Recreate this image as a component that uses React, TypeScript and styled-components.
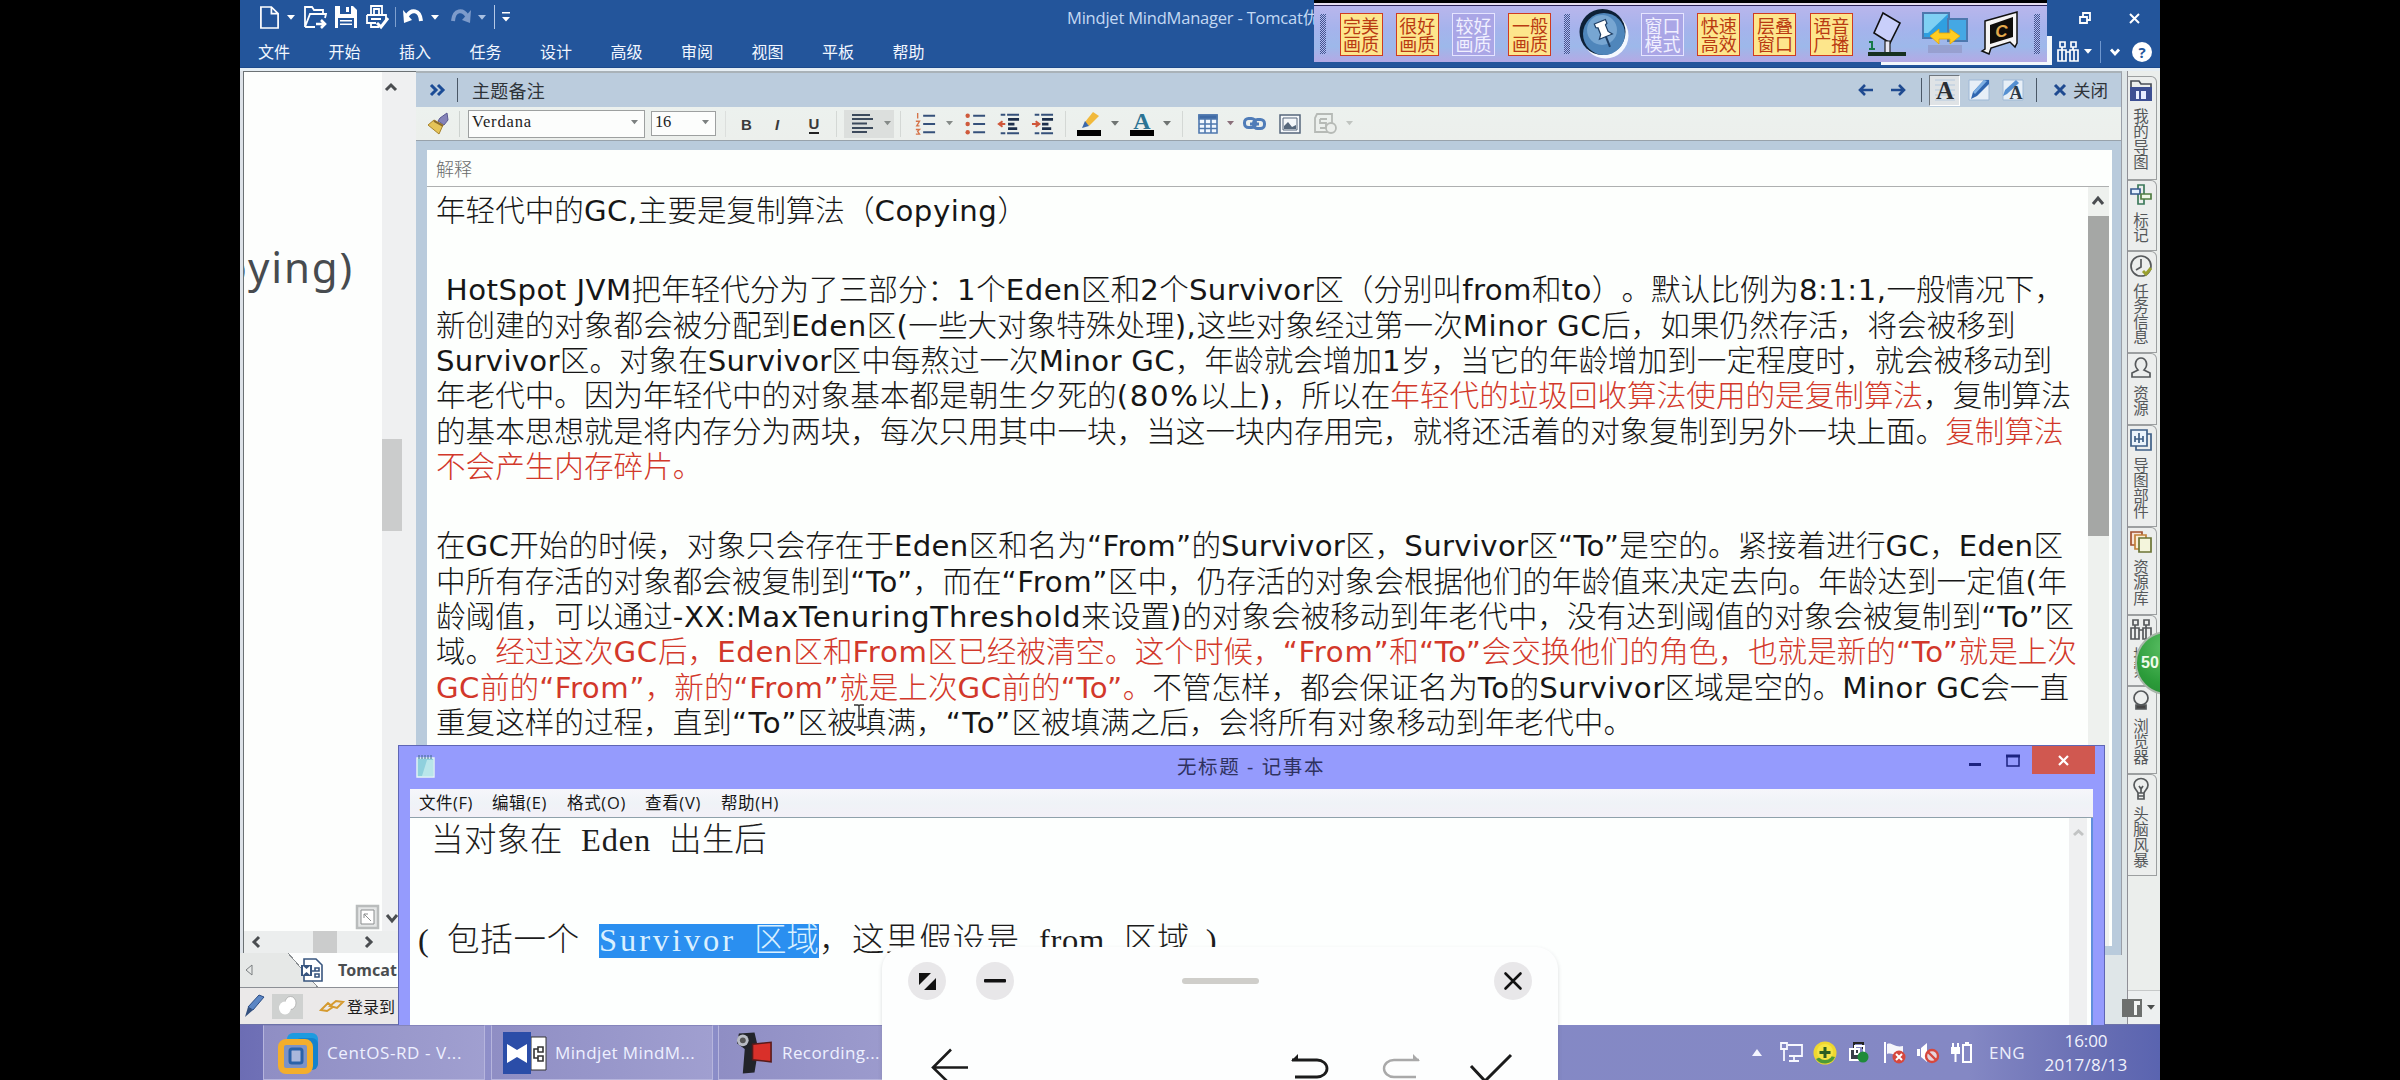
import React, { useLayoutEffect, useRef, useState } from "react";
import styled, { createGlobalStyle, css } from "styled-components";

const CJK = `"Noto Sans CJK SC", sans-serif`;
const UI = `"Open Sans", "Noto Sans CJK SC", sans-serif`;
const SONG = `"Liberation Serif", "Noto Sans CJK SC", serif`;

const Global = createGlobalStyle`
  *, *::before, *::after { box-sizing: border-box; }
  html, body { margin: 0; background: #000; overflow: hidden; }
  svg { display: block; flex: none; overflow: visible; }
`;

/* ---------- text that is justified to a known width ---------- */

const FitBox = styled.span`
  display: inline-block;
  white-space: pre;
  flex: none;
`;

function Fit({ w, children }: { w: number; children: React.ReactNode }) {
  const ref = useRef<HTMLSpanElement>(null);
  const [gap, setGap] = useState(0);
  useLayoutEffect(() => {
    const el = ref.current;
    if (!el) return;
    el.style.letterSpacing = "0px";
    const natural = el.getBoundingClientRect().width;
    const next = (w - natural) / (el.textContent || " ").length;
    el.style.letterSpacing = `${next}px`;
    setGap(next);
  }, [w]);
  return (
    <FitBox ref={ref} style={{ letterSpacing: gap }}>
      {children}
    </FitBox>
  );
}

/* ---------- shell ---------- */

const Page = styled.div`
  width: 2400px;
  height: 1080px;
  background: #000;
  display: flex;
  justify-content: center;
  overflow: hidden;
`;

const Screen = styled.div`
  position: relative;
  width: 1920px;
  height: 1080px;
  overflow: hidden;
  display: flex;
  flex-direction: column;
  background: #e9ecec;
  font-family: ${UI};
  text-spacing-trim: space-all;
`;

const Cell = styled.div<{ $ml?: number; $w?: number }>`
  flex: none;
  display: flex;
  align-items: center;
  justify-content: center;
  margin-left: ${(p) => p.$ml ?? 0}px;
  ${(p) => p.$w !== undefined && css`width: ${p.$w}px;`}
`;

const Rule = styled.i<{ $ml?: number; $h: number; $c: string; $w?: number }>`
  flex: none;
  width: ${(p) => p.$w ?? 1}px;
  height: ${(p) => p.$h}px;
  margin-left: ${(p) => p.$ml ?? 0}px;
  background: ${(p) => p.$c};
`;

/* ---------- title bar and ribbon ---------- */

const TitleBar = styled.header`
  flex: none;
  height: 68px;
  background: #23559b;
  border-bottom: 1px solid #1d4a8c;
  color: #e6effa;
`;

const QuickRow = styled.div`
  height: 34px;
  display: flex;
  align-items: center;
`;

const WindowTitle = styled.div`
  margin: 0 841px 0 auto;
  font-size: 16.5px;
  color: #c3d9f3;
`;

const MenuRow = styled.nav`
  height: 34px;
  padding-left: 18px;
  display: flex;
  align-items: center;
`;

const MenuItem = styled.span`
  flex: none;
  width: 70.5px;
  font: 400 16px/34px ${CJK};
  color: #f2f7ff;
`;

const Down = ({ c = "#fff", s = 8 }: { c?: string; s?: number }) => (
  <svg width={s} height={s * 0.6} viewBox="0 0 10 6">
    <path d="M0 0H10L5 6Z" fill={c} />
  </svg>
);

function TitleArea() {
  return (
    <TitleBar>
      <QuickRow>
        <Cell $ml={18} $w={22}>
          <svg width="21" height="23" viewBox="0 0 22 24" fill="none" stroke="#fff" strokeWidth="1.8">
            <path d="M2 1H13L20 8V23H2ZM13 1V8H20" />
          </svg>
        </Cell>
        <Cell $ml={7}><Down /></Cell>
        <Cell $ml={8} $w={24}>
          <svg width="24" height="24" viewBox="0 0 24 24" fill="none" stroke="#fff" strokeWidth="1.8">
            <path d="M2 22V2H9L11 5H20V8M2 22L7 9H23L22 13M2 22H12" />
            <path d="M13 19H22M18 15L22 19L18 23" strokeWidth="2.6" />
          </svg>
        </Cell>
        <Cell $ml={7} $w={24}>
          <svg width="24" height="24" viewBox="0 0 24 24">
            <path d="M1 1H19L23 5V23H1Z" fill="#fff" />
            <path d="M6 1H17V9H6ZM4 13H20V23H4Z" fill="#23559b" />
            <path d="M12 2H15V7H12ZM6 15H18V16.5H6ZM6 18.5H18V20H6Z" fill="#fff" />
          </svg>
        </Cell>
        <Cell $ml={7} $w={24}>
          <svg width="24" height="24" viewBox="0 0 24 24" fill="none" stroke="#fff" strokeWidth="1.8">
            <path d="M6 10V1H17V10M9 10V4H14V10M2 10H21V15M2 10V18H6V22H14M6 14H16M6 18H11" />
            <path d="M12 18L16 22L23 13" strokeWidth="3" />
          </svg>
        </Cell>
        <Rule $ml={6} $h={20} $c="#7fa0cf" />
        <Cell $ml={7} $w={21}>
          <svg width="21" height="18" viewBox="0 0 21 18">
            <path d="M4 8C8 1 17 1 18 13" fill="none" stroke="#fff" strokeWidth="4" />
            <path d="M0 2L9 12L1 15Z" fill="#fff" />
          </svg>
        </Cell>
        <Cell $ml={7}><Down /></Cell>
        <Cell $ml={11} $w={21}>
          <svg width="21" height="18" viewBox="0 0 21 18">
            <path d="M17 8C13 1 4 1 3 13" fill="none" stroke="#7d9bcb" strokeWidth="4" />
            <path d="M21 2L12 12L20 15Z" fill="#7d9bcb" />
          </svg>
        </Cell>
        <Cell $ml={7}><Down c="#a9c0e2" /></Cell>
        <Rule $ml={8} $h={24} $c="#b4c8e6" />
        <Cell $ml={7}>
          <svg width="8" height="10" viewBox="0 0 8 10">
            <path d="M0 0H8V1.6H0ZM0 5H8L4 9.5Z" fill="#fff" />
          </svg>
        </Cell>
        <WindowTitle>
          <Fit w={252}>Mindjet MindManager - Tomcat优</Fit>
        </WindowTitle>
      </QuickRow>
      <MenuRow>
        {["文件", "开始", "插入", "任务", "设计", "高级", "审阅", "视图", "平板", "帮助"].map((m) => (
          <MenuItem key={m}>{m}</MenuItem>
        ))}
      </MenuRow>
    </TitleBar>
  );
}

/* window buttons at the right end of the title bar */
const WindowButtons = styled.div`
  position: absolute;
  left: 1812px;
  top: 0;
  width: 108px;
  height: 67px;
  display: grid;
  grid-template-rows: 36px 31px;
`;
const ButtonLine = styled.div`
  display: flex;
  align-items: center;
`;

/* ---------- floating capture bar ---------- */

const CaptureBar = styled.div`
  position: absolute;
  left: 1074px;
  top: 0;
  width: 733px;
  height: 62px;
  display: flex;
  align-items: center;
  padding-top: 6px;
  background: linear-gradient(#000 0 3px, #e8dff0 3px 5px, #2c2458 5px 6px, #b9b6ec 6px, #a6b3ec 45%, #9db8ea 75%, #b4a9e4);
`;
const CaptureShadow = styled.div`
  position: absolute;
  left: 1641px;
  top: 36px;
  width: 171px;
  height: 29px;
  border: solid #f4f8fb;
  border-width: 0 5px 4px 0;
`;
const Grip = styled.i<{ $ml: number }>`
  flex: none;
  width: 6px;
  height: 40px;
  margin-left: ${(p) => p.$ml}px;
  background: repeating-conic-gradient(#47548f 0 25%, #aebcf0 0 50%) 0 0 / 2px 2px;
`;
const Stamp = styled.div<{ $ml: number; $off?: boolean }>`
  flex: none;
  width: 43px;
  height: 43px;
  margin-left: ${(p) => p.$ml}px;
  border: 1.5px solid ${(p) => (p.$off ? "#e5e4ff" : "#cf3b22")};
  background: ${(p) => (p.$off ? "#aaa6e6" : "#fde68c")};
  color: ${(p) => (p.$off ? "#f1f0ff" : "#b93a12")};
  display: grid;
  place-content: center;
  text-align: center;
  font: 400 18px/18px ${CJK};
`;

function Capture() {
  return (
    <>
      <CaptureShadow />
      <CaptureBar>
        <Grip $ml={6} />
        <Stamp $ml={13.5}>完美<br />画质</Stamp>
        <Stamp $ml={13.3}>很好<br />画质</Stamp>
        <Stamp $ml={13.3} $off>较好<br />画质</Stamp>
        <Stamp $ml={13.3}>一般<br />画质</Stamp>
        <Grip $ml={13} />
        <Cell $ml={9} $w={50}>
          <svg width="50" height="50" viewBox="0 0 50 50">
            <circle cx="26.5" cy="26.5" r="23" fill="#f4f8ff" />
            <circle cx="23.5" cy="23" r="23" fill="#0d2036" />
            <circle cx="25" cy="25" r="21" fill="#4f86bb" />
            <circle cx="23" cy="21" r="15" fill="#77a6d2" />
            <g transform="rotate(-22 25 23)">
              <path d="M19 12H31V16L29 17V24L32 28H18L21 24V17L19 16Z" fill="#fff" stroke="#1d3d63" strokeWidth="1.2" />
              <path d="M25 28V39" stroke="#1d3d63" strokeWidth="2" />
            </g>
          </svg>
        </Cell>
        <Stamp $ml={11.5} $off>窗口<br />模式</Stamp>
        <Stamp $ml={13.3}>快速<br />高效</Stamp>
        <Stamp $ml={13.3}>层叠<br />窗口</Stamp>
        <Stamp $ml={13.3}>语音<br />广播</Stamp>
        <Cell $ml={14} $w={40}>
          <svg width="40" height="46" viewBox="0 0 40 46">
            <path d="M16 2L33 12L23 32L7 22Z" fill="#c9cffa" stroke="#111" strokeWidth="1.6" />
            <path d="M18 30H23V42H18Z" fill="#e8e8f4" stroke="#222" strokeWidth="1.2" />
            <path d="M1 43H39" stroke="#17301f" strokeWidth="4" />
            <path d="M2 31H5V38M2 38H8" stroke="#157a4a" strokeWidth="2" fill="none" />
          </svg>
        </Cell>
        <Cell $ml={15} $w={46}>
          <svg width="46" height="46" viewBox="0 0 46 46">
            <path d="M6 34H40V42H6Z" fill="#8f93bf" opacity="0.6" />
            <path d="M1 2H27V27H1Z" fill="#2f9fe0" stroke="#4d78ae" strokeWidth="2" />
            <path d="M26 8H45V30H26Z" fill="#45a8e4" stroke="#4d78ae" strokeWidth="2" />
            <path d="M2 3H26L6 22H2Z" fill="#7fd0f3" />
            <path d="M8 25L17 18V22H28V18L38 25L28 33V28H17V33Z" fill="#ffcd23" stroke="#e8a400" strokeWidth="0.8" />
          </svg>
        </Cell>
        <Cell $ml={14} $w={38}>
          <svg width="38" height="46" viewBox="0 0 38 46">
            <path d="M3 10L35 1V32L33 36L28 31L9 37L7 43L0 40L3 38Z" fill="#f5f4f4" stroke="#111" strokeWidth="1.5" />
            <path d="M8 14L31 6V26L8 33Z" fill="#0f0d0a" />
            <text x="19.5" y="26" textAnchor="middle" fontFamily="Liberation Sans, sans-serif" fontWeight="700" fontStyle="italic" fontSize="17" fill="#e2a94c">C</text>
          </svg>
        </Cell>
        <Grip $ml={14} />
      </CaptureBar>
      <WindowButtons>
        <ButtonLine>
          <Cell $ml={27} $w={12}>
            <svg width="12" height="12" viewBox="0 0 12 12" fill="none" stroke="#fff" strokeWidth="1.8">
              <path d="M1 5H8V11H1ZM4 5V1H11V8H8" />
            </svg>
          </Cell>
          <Cell $ml={38} $w={11}>
            <svg width="11" height="11" viewBox="0 0 11 11" stroke="#fff" strokeWidth="2">
              <path d="M1 1L10 10M10 1L1 10" />
            </svg>
          </Cell>
        </ButtonLine>
        <ButtonLine>
          <Cell $ml={5} $w={22}>
            <svg width="22" height="22" viewBox="0 0 22 22" fill="none" stroke="#fff" strokeWidth="1.7">
              <path d="M3 1H8V6H3ZM14 1H19V6H14ZM1 9H9V20H1ZM13 9H21V20H13ZM9 11H13M5 9V20M17 9V20M5 6V9M16 6V9" />
            </svg>
          </Cell>
          <Cell $ml={5}><Down /></Cell>
          <Rule $ml={8} $h={22} $c="#6f97cf" />
          <Cell $ml={9} $w={10}>
            <svg width="10" height="8" viewBox="0 0 10 8" fill="none" stroke="#fff" strokeWidth="2.8">
              <path d="M1 1.5L5 6L9 1.5" />
            </svg>
          </Cell>
          <Cell $ml={12} $w={20}>
            <svg width="20" height="20" viewBox="0 0 20 20">
              <circle cx="10" cy="10" r="10" fill="#fff" />
              <text x="10" y="15.5" textAnchor="middle" fontFamily="Open Sans, sans-serif" fontWeight="700" fontSize="15" fill="#23559b">?</text>
            </svg>
          </Cell>
        </ButtonLine>
      </WindowButtons>
    </>
  );
}

/* ---------- work area ---------- */

const Work = styled.div`
  flex: none;
  height: 956px;
  display: flex;
  border-top: 3px solid #e6eef4;
`;

const MapPane = styled.section`
  flex: none;
  width: 176px;
  display: flex;
  flex-direction: column;
  background: #dde2e8;
`;
const Canvas = styled.div`
  height: 860px;
  margin-left: 3px;
  border-left: 1px solid #6c7275;
  border-top: 1px solid #6c7275;
  display: grid;
  grid-template-columns: 138px 1fr;
  background: #fdfefd;
`;
const MapText = styled.div`
  overflow: hidden;
  display: flex;
  justify-content: flex-end;
  padding: 165px 28px 0 0;
  font: 400 42px/60px "Noto Sans", sans-serif;
  color: #474b4f;
`;
const Track = styled.div<{ $c?: string }>`
  background: ${(p) => p.$c ?? "#eff0f1"};
  display: flex;
  flex-direction: column;
  align-items: flex-start;
`;
const Spacer = styled.div<{ $h: number }>`
  flex: none;
  height: ${(p) => p.$h}px;
`;
const Thumb = styled.i<{ $ml?: number; $w: number; $h: number; $c?: string }>`
  display: block;
  flex: none;
  margin-left: ${(p) => p.$ml ?? 0}px;
  width: ${(p) => p.$w}px;
  height: ${(p) => p.$h}px;
  background: ${(p) => p.$c ?? "#cbcccc"};
`;
const HScroll = styled.div`
  height: 22px;
  margin-left: 3px;
  border-left: 1px solid #6c7275;
  background: #eceeee;
  display: flex;
  align-items: center;
`;
const SheetTabs = styled.div`
  height: 35px;
  display: flex;
  align-items: center;
  background: linear-gradient(49deg, #e6e8e7 58px, #8b8f92 58px 59px, #fdfefe 59px);
  border-bottom: 1px solid #8c8f95;
  font: 700 16px/34px "Noto Sans", sans-serif;
  color: #4a4d50;
`;
const StatusBar = styled.div`
  flex: 1;
  display: flex;
  align-items: center;
  background: #ebe9e9;
  font: 400 16px/30px ${CJK};
  color: #1c1c1c;
`;
const Pressed = styled.div<{ $ml: number; $w: number; $h: number }>`
  flex: none;
  display: grid;
  place-items: center;
  margin-left: ${(p) => p.$ml}px;
  width: ${(p) => p.$w}px;
  height: ${(p) => p.$h}px;
  background: #cfd1d0;
`;

const Chevron = ({ d, c = "#4a4d50", w = 12, h = 8 }: { d: string; c?: string; w?: number; h?: number }) => (
  <svg width={w} height={h} viewBox={`0 0 ${w} ${h}`} fill="none" stroke={c} strokeWidth="3">
    <path d={d} />
  </svg>
);

function MindMap() {
  return (
    <MapPane>
      <Canvas>
        <MapText><Fit w={133}>pying)</Fit></MapText>
        <Track>
          <Spacer $h={11} />
          <Cell $ml={3}><Chevron d="M1 7L6 2L11 7" h={9} /></Cell>
          <Spacer $h={347} />
          <Thumb $w={20} $h={92} />
          <Spacer $h={374} />
          <Cell $ml={-26}>
            <svg width="23" height="24" viewBox="0 0 23 24" fill="none" stroke="#8a8d8e">
              <path d="M1 1H22V23H1Z" stroke="#b9bcbc" strokeWidth="2.5" fill="#e4e6e6" />
              <path d="M5 5H18V19H5Z" fill="#fff" />
              <path d="M8 13V9H12M8 9L15 16" />
            </svg>
            <Cell $ml={7}><Chevron d="M1 2L6 8L11 2" h={9} /></Cell>
          </Cell>
        </Track>
      </Canvas>
      <HScroll>
        <Cell $ml={8}><Chevron w={8} h={12} d="M7 1L2 6L7 11" /></Cell>
        <Thumb $ml={53} $w={24} $h={22} />
        <Cell $ml={28}><Chevron w={8} h={12} d="M1 1L6 6L1 11" /></Cell>
      </HScroll>
      <SheetTabs>
        <Cell $ml={5} $w={8}>
          <svg width="8" height="12" viewBox="0 0 8 12" fill="none" stroke="#7a7e80"><path d="M7 1V11L1 6Z" /></svg>
        </Cell>
        <Cell $ml={48} $w={22}>
          <svg width="22" height="24" viewBox="0 0 22 24" fill="#fff" stroke="#38557f" strokeWidth="1.6">
            <path d="M3 1H15L21 7V23H3Z" />
            <path d="M0 7H11V18H0Z" fill="#38557f" stroke="none" />
            <path d="M2 8L5.5 11L9 8V17L5.5 14L2 17Z" stroke="none" />
            <path d="M14 10H18V13H14ZM14 16H18V19H14ZM11 13H14" fill="none" />
          </svg>
        </Cell>
        <Cell $ml={15}><Fit w={59}>Tomcat</Fit></Cell>
      </SheetTabs>
      <StatusBar>
        <Cell $ml={5} $w={20}>
          <svg width="20" height="22" viewBox="0 0 20 22">
            <path d="M19 2L8 15L3 12L14 0Z" fill="#5b86c4" stroke="#2c4d85" />
            <path d="M8 15L0 22L3 12Z" fill="#33507f" />
          </svg>
        </Cell>
        <Pressed $ml={7} $w={31} $h={25}>
          <svg width="20" height="20" viewBox="0 0 20 20">
            <ellipse cx="12.5" cy="7" rx="5.5" ry="6.5" fill="#fff" stroke="#a5a5a5" strokeWidth="0.7" />
            <ellipse cx="7" cy="12" rx="6" ry="6.5" fill="#fff" />
          </svg>
        </Pressed>
        <Cell $ml={17} $w={24}>
          <svg width="24" height="14" viewBox="0 0 24 14" fill="none" stroke="#d59a2e" strokeWidth="2">
            <path d="M1 11L8 4L13 8L7 12ZM10 7L16 2L23 3L17 9Z" />
          </svg>
        </Cell>
        <Cell $ml={3}><Fit w={48}>登录到</Fit></Cell>
      </StatusBar>
    </MapPane>
  );
}

/* ---------- notes panel ---------- */

const NotesPane = styled.section`
  flex: none;
  width: 1712px;
  display: flex;
  flex-direction: column;
  border-right: 1px solid #8f8f96;
  background: #dfe6e8;
`;
const NotesFrame = styled.div`
  width: 1706px;
  height: 884px;
  display: flex;
  flex-direction: column;
  background: #b9cbdc;
  border-top: 2px solid #a9b2b8;
  border-right: 1px solid #9a9fa8;
`;
const NotesHead = styled.div`
  flex: none;
  height: 34px;
  display: flex;
  align-items: center;
  background: #bbccdd;
  color: #2e3338;
  font: 400 18px/32px ${CJK};
`;
const HeadClose = styled.div`
  margin: 0 13px 0 7px;
  font-size: 17.5px;
`;
const Push = styled.i`
  flex: 1;
`;
const NotesTools = styled.div`
  flex: none;
  height: 34px;
  display: flex;
  align-items: center;
  background: linear-gradient(#ecf1ee, #ecefec);
  border-bottom: 1px solid #98a2ab;
`;
const Combo = styled.div<{ $ml: number; $w: number; $h: number }>`
  flex: none;
  margin-left: ${(p) => p.$ml}px;
  width: ${(p) => p.$w}px;
  height: ${(p) => p.$h}px;
  border: 1px solid #9da0a0;
  background: #fcfdfc;
  display: flex;
  align-items: center;
  justify-content: space-between;
  padding: 0 6px 3px 3px;
  font: 400 16.5px/20px ${SONG};
  color: #222;
`;
const Glyph = styled.span<{ $italic?: boolean; $under?: boolean }>`
  font: 700 15px/20px "Liberation Sans", sans-serif;
  font-style: ${(p) => (p.$italic ? "italic" : "normal")};
  color: #3a3a3a;
  padding-top: 3px;
  ${(p) => p.$under && css`line-height: 16px; border-bottom: 2px solid #222;`}
`;
const Toggle = styled.div`
  flex: none;
  width: 31px;
  height: 31px;
  margin-left: 7px;
  display: grid;
  place-items: center;
  background: #dfe3e6;
  border: 1.5px solid #6f767d;
  border-color: #6f767d #fff #fff #6f767d;
`;
const Shade = styled.div`
  flex: none;
  height: 28px;
  width: 50px;
  margin-left: 7px;
  display: flex;
  align-items: center;
  padding-left: 8px;
  background: #dcdfdd;
`;

const NotesPaper = styled.article`
  margin: 9px 9px 9px 11px;
  flex: 1;
  min-height: 0;
  display: flex;
  flex-direction: column;
  background: #fdfffd;
`;
const TopicName = styled.div`
  flex: none;
  height: 37px;
  margin-right: 3px;
  padding-left: 9px;
  border-bottom: 1px solid #aeb0b0;
  font: 300 18px/37px ${CJK};
  color: #6a6c6c;
`;
const NotesBody = styled.div`
  flex: 1;
  min-height: 0;
  display: grid;
  grid-template-columns: 1fr 21px;
  padding-right: 3px;
`;
const Lines = styled.div`
  padding: 4px 0 0 9px;
  overflow: hidden;
`;
const Line = styled.p`
  margin: 0;
  height: 35.3px;
  line-height: 35.3px;
  white-space: pre;
`;
const Blank = styled.div`
  height: 44.2px;
`;
const Latin = styled.span<{ $red?: boolean }>`
  font-family: "DejaVu Sans", Verdana, sans-serif;
  font-size: 29.2px;
  font-weight: 400;
  letter-spacing: var(--latin-gap, 0px);
  color: ${(p) => (p.$red ? "#d2382a" : "#161616")};
`;
const Han = styled.span<{ $red?: boolean }>`
  font-family: ${CJK};
  font-size: 29.6px;
  font-weight: 300;
  color: ${(p) => (p.$red ? "#d2382a" : "#161616")};
`;
const RichBox = styled.span`
  display: inline-block;
`;

type Seg = [string, boolean?];
const notes: Array<{ w: number; s: Seg[] } | null> = [
  { w: 591, s: [["年轻代中的GC,主要是复制算法（Copying）"]] },
  null,
  { w: 1628, s: [[" HotSpot JVM把年轻代分为了三部分：1个Eden区和2个Survivor区（分别叫from和to）。默认比例为8:1:1,一般情况下，"]] },
  { w: 1579.5, s: [["新创建的对象都会被分配到Eden区(一些大对象特殊处理),这些对象经过第一次Minor GC后，如果仍然存活，将会被移到"]] },
  { w: 1616, s: [["Survivor区。对象在Survivor区中每熬过一次Minor GC，年龄就会增加1岁，当它的年龄增加到一定程度时，就会被移动到"]] },
  { w: 1635, s: [["年老代中。因为年轻代中的对象基本都是朝生夕死的(80%以上)，所以在"], ["年轻代的垃圾回收算法使用的是复制算法", true], ["，复制算法"]] },
  { w: 1628, s: [["的基本思想就是将内存分为两块，每次只用其中一块，当这一块内存用完，就将还活着的对象复制到另外一块上面。"], ["复制算法", true]] },
  { w: 265.5, s: [["不会产生内存碎片。", true]] },
  null,
  { w: 1627, s: [["在GC开始的时候，对象只会存在于Eden区和名为“From”的Survivor区，Survivor区“To”是空的。紧接着进行GC，Eden区"]] },
  { w: 1631, s: [["中所有存活的对象都会被复制到“To”，而在“From”区中，仍存活的对象会根据他们的年龄值来决定去向。年龄达到一定值(年"]] },
  { w: 1638, s: [["龄阈值，可以通过-XX:MaxTenuringThreshold来设置)的对象会被移动到年老代中，没有达到阈值的对象会被复制到“To”区"]] },
  { w: 1641, s: [["域。"], ["经过这次GC后，Eden区和From区已经被清空。这个时候，“From”和“To”会交换他们的角色，也就是新的“To”就是上次", true]] },
  { w: 1633, s: [["GC前的“From”，新的“From”就是上次GC前的“To”。", true], ["不管怎样，都会保证名为To的Survivor区域是空的。Minor GC会一直"]] },
  { w: 1197, s: [["重复这样的过程，直到“To”区被填满，“To”区被填满之后，会将所有对象移动到年老代中。"]] },
];

/* Han glyphs keep their square advance; the slack of a line goes to its Latin runs. */
function RichLine({ w, segs }: { w: number; segs: Seg[] }) {
  const ref = useRef<HTMLSpanElement>(null);
  const [gap, setGap] = useState(0);
  const all = segs.map((s) => s[0]).join("");
  const latin = (all.match(/[\x20-\x7e“”]/g) || []).length;
  useLayoutEffect(() => {
    const el = ref.current;
    if (!el || !latin) return;
    el.style.setProperty("--latin-gap", "0px");
    const next = (w - el.getBoundingClientRect().width) / latin;
    el.style.setProperty("--latin-gap", `${next}px`);
    setGap(next);
  }, [w, latin]);
  return (
    <Line>
      <RichBox ref={ref} style={{ "--latin-gap": `${gap}px` } as React.CSSProperties}>
        {segs.map(([text, red], i) =>
          (text.match(/[\x20-\x7e“”]+|[^\x20-\x7e“”]+/g) || []).map((run, j) =>
            /^[\x20-\x7e“”]/.test(run) ? (
              <Latin key={`${i}-${j}`} $red={red}>{run}</Latin>
            ) : (
              <Han key={`${i}-${j}`} $red={red}>{run}</Han>
            )
          )
        )}
      </RichBox>
    </Line>
  );
}

function Notes() {
  return (
    <NotesPane>
      <NotesFrame>
        <NotesHead>
          <Cell $ml={14} $w={15}>
            <svg width="15" height="12" viewBox="0 0 15 12" fill="none" stroke="#1b4c96" strokeWidth="3">
              <path d="M1 1L6 6L1 11M8 1L13 6L8 11" />
            </svg>
          </Cell>
          <Rule $ml={12} $h={24} $c="#4a5766" />
          <Cell $ml={14}><Fit w={73}>主题备注</Fit></Cell>
          <Push />
          <Cell $w={15}>
            <svg width="15" height="12" viewBox="0 0 15 12" fill="none" stroke="#1f4a90" strokeWidth="2.6"><path d="M15 6H2M7 1L2 6L7 11" /></svg>
          </Cell>
          <Cell $ml={18} $w={15}>
            <svg width="15" height="12" viewBox="0 0 15 12" fill="none" stroke="#1f4a90" strokeWidth="2.6"><path d="M0 6H13M8 1L13 6L8 11" /></svg>
          </Cell>
          <Rule $ml={15} $h={24} $c="#4a5766" />
          <Toggle>
            <svg width="20" height="22" viewBox="0 0 20 22">
              <path d="M0 1H20M0 6H20M0 11H20M0 16H20M0 21H20" stroke="#b5c9de" />
              <text x="10" y="20" textAnchor="middle" fontFamily="Liberation Serif, serif" fontWeight="700" fontSize="25" fill="#2a2e33">A</text>
            </svg>
          </Toggle>
          <Cell $ml={9} $w={20}>
            <svg width="20" height="22" viewBox="0 0 20 22">
              <path d="M0 1H20V21H0Z" fill="#e7eff7" stroke="#9fb9d6" />
              <path d="M15 1L20 1V5L8 17L2 20L4 13Z" fill="#2f66b0" />
              <path d="M15 1L4 13L6 15L18 2Z" fill="#7eb0e4" />
            </svg>
          </Cell>
          <Cell $ml={14} $w={20}>
            <svg width="20" height="22" viewBox="0 0 20 22">
              <path d="M0 1H20V21H0Z" fill="#e7eff7" stroke="#9fb9d6" />
              <path d="M13 1L16 4L4 15L0 17L2 11Z" fill="#5590d2" />
              <text x="13" y="20" textAnchor="middle" fontFamily="Liberation Serif, serif" fontWeight="700" fontSize="18" fill="#2a3948">A</text>
            </svg>
          </Cell>
          <Rule $ml={13} $h={24} $c="#4a5766" />
          <Cell $ml={17} $w={12}>
            <svg width="12" height="12" viewBox="0 0 12 12" stroke="#1f4a90" strokeWidth="3"><path d="M1 1L11 11M11 1L1 11" /></svg>
          </Cell>
          <HeadClose><Fit w={35}>关闭</Fit></HeadClose>
        </NotesHead>

        <NotesTools>
          <Cell $ml={11} $w={22}>
            <svg width="22" height="22" viewBox="0 0 22 22">
              <path d="M13 5L20 0L21 7L17 12L11 8Z" fill="#8583b8" stroke="#5b5a92" />
              <path d="M7 7L16 12L12 21L1 12Z" fill="#e5c458" stroke="#a7822b" />
              <path d="M7 8L16 13" stroke="#8a6b2b" strokeWidth="2" />
            </svg>
          </Cell>
          <Rule $ml={10} $h={26} $c="#cdd2cf" />
          <Combo $ml={8} $w={177} $h={28}><Fit w={60}>Verdana</Fit><Down c="#7c8080" s={7} /></Combo>
          <Combo $ml={6} $w={65} $h={25}><Fit w={16}>16</Fit><Down c="#7c8080" s={7} /></Combo>
          <Rule $ml={9} $h={26} $c="#dcdfdd" />
          <Cell $ml={15} $w={11}><Glyph>B</Glyph></Cell>
          <Cell $ml={20} $w={10}><Glyph $italic>I</Glyph></Cell>
          <Cell $ml={26} $w={12}><Glyph $under>U</Glyph></Cell>
          <Rule $ml={16} $h={26} $c="#d4d8d5" />
          <Shade>
            <svg width="21" height="19" viewBox="0 0 21 19" stroke="#3c4a5c" strokeWidth="1.8"><path d="M0 1H18M0 5H21M0 9.5H15M0 14H21M0 18H15" /></svg>
            <Cell $ml={11}><Down c="#858a88" s={7} /></Cell>
          </Shade>
          <Rule $ml={6} $h={26} $c="#d4d8d5" />
          <Cell $ml={13} $w={22}>
            <svg width="22" height="22" viewBox="0 0 22 24" strokeWidth="2.2">
              <path d="M9 3H22M9 12H22M9 21H22" stroke="#34507a" />
              <path d="M3 0V6M1 9H5L2 14H5M1 18H5L3 20L5 23H1" stroke="#d5744a" fill="none" strokeWidth="1.5" />
            </svg>
          </Cell>
          <Cell $ml={10}><Down c="#858a88" s={7} /></Cell>
          <Cell $ml={11} $w={22}>
            <svg width="22" height="22" viewBox="0 0 22 24">
              <path d="M9 3H22M9 12H22M9 21H22" stroke="#34507a" strokeWidth="2.2" />
              <circle cx="3" cy="3" r="2.4" fill="#cf5a3c" /><circle cx="3" cy="12" r="2.4" fill="#cf5a3c" /><circle cx="3" cy="21" r="2.4" fill="#cf5a3c" />
            </svg>
          </Cell>
          <Cell $ml={11} $w={23}>
            <svg width="23" height="22" viewBox="0 0 23 24" strokeWidth="2.2">
              <path d="M3 2H8M10 2H23M3 22H8M10 22H23" stroke="#34507a" />
              <path d="M11 7H23M11 12H18M11 17H21" stroke="#1d2f4c" strokeWidth="3" />
              <path d="M8 12H2M5 9L1 12L5 15" stroke="#d0573a" fill="none" />
            </svg>
          </Cell>
          <Cell $ml={11} $w={23}>
            <svg width="23" height="22" viewBox="0 0 23 24" strokeWidth="2.2">
              <path d="M3 2H8M10 2H23M3 22H8M10 22H23" stroke="#34507a" />
              <path d="M11 7H23M11 12H18M11 17H21" stroke="#1d2f4c" strokeWidth="3" />
              <path d="M0 12H7M4 9L8 12L4 15" stroke="#d0573a" fill="none" />
            </svg>
          </Cell>
          <Rule $ml={11} $h={26} $c="#d4d8d5" />
          <Cell $ml={11} $w={24}>
            <svg width="24" height="24" viewBox="0 0 24 24">
              <path d="M0 18H24V24H0Z" fill="#000" />
              <path d="M16 0L22 4L12 14L8 10Z" fill="#f1b93c" /><path d="M8 9L12 14L5 16Z" fill="#3c68a8" />
            </svg>
          </Cell>
          <Cell $ml={10}><Down c="#6f7472" /></Cell>
          <Cell $ml={11} $w={24}>
            <svg width="24" height="24" viewBox="0 0 24 24">
              <path d="M0 18H24V24H0Z" fill="#000" />
              <text x="12" y="17" textAnchor="middle" fontFamily="Liberation Serif, serif" fontWeight="700" fontSize="24" fill="#2b7394">A</text>
            </svg>
          </Cell>
          <Cell $ml={9}><Down c="#6f7472" /></Cell>
          <Rule $ml={11} $h={26} $c="#d4d8d5" />
          <Cell $ml={15} $w={20}>
            <svg width="20" height="20" viewBox="0 0 20 20" fill="#f2f8ff" stroke="#4f78ae" strokeWidth="1.6">
              <path d="M1 1H19V19H1Z" /><path d="M1 1H19V5H1Z" fill="#3f6aa5" /><path d="M1 10H19M1 14.5H19M7 5V19M13 5V19" />
            </svg>
          </Cell>
          <Cell $ml={9}><Down c="#8a6f7a" s={7} /></Cell>
          <Cell $ml={9} $w={23}>
            <svg width="23" height="13" viewBox="0 0 23 13" fill="none" stroke="#4f7cb8" strokeWidth="3">
              <rect x="1.5" y="1.5" width="11" height="9" rx="4" /><rect x="10.5" y="2.5" width="11" height="9" rx="4" /><path d="M7 7H16" />
            </svg>
          </Cell>
          <Cell $ml={13} $w={22}>
            <svg width="22" height="20" viewBox="0 0 22 20" fill="#f4f7fa" stroke="#56677c" strokeWidth="1.5">
              <path d="M1 1H21V19H1Z" /><path d="M4 4H18V16H4Z" strokeWidth="1" /><path d="M5 12L9 8L13 13L17 11V15H5Z" fill="#56677c" stroke="none" />
            </svg>
          </Cell>
          <Cell $ml={13} $w={23}>
            <svg width="23" height="22" viewBox="0 0 23 22" fill="none" stroke="#b6bab6" strokeWidth="1.8">
              <path d="M3 1H18V19H1V5ZM6 6H13M6 6V10H12V15H6" /><circle cx="17" cy="15" r="5" fill="#ecefec" />
            </svg>
          </Cell>
          <Cell $ml={9}><Down c="#c0c4c0" s={7} /></Cell>
        </NotesTools>

        <NotesPaper>
          <TopicName><Fit w={36}>解释</Fit></TopicName>
          <NotesBody>
            <Lines>
              {notes.map((l, i) => (l ? <RichLine key={i} w={l.w} segs={l.s} /> : <Blank key={i} />))}
            </Lines>
            <Track $c="#eef1ee">
              <Spacer $h={9} />
              <Cell $ml={4}><Chevron d="M1 8L6 2L11 8" h={10} /></Cell>
              <Spacer $h={10} />
              <Thumb $w={21} $h={320} $c="#a5a7a5" />
            </Track>
          </NotesBody>
        </NotesPaper>
      </NotesFrame>
    </NotesPane>
  );
}

/* ---------- side tabs ---------- */

const Side = styled.aside`
  flex: 1;
  display: flex;
  flex-direction: column;
  padding-top: 5px;
  background: #ebeeec;
`;
const SideTab = styled.div<{ $h: number }>`
  flex: none;
  width: 29px;
  height: ${(p) => p.$h}px;
  border: 1px solid #9c9fa0;
  border-left: none;
  border-radius: 0 6px 0 0;
  display: flex;
  flex-direction: column;
  align-items: center;
  gap: 6px;
  padding: 3px 2px 0 0;
  background: #eceeed;
`;
const SideLabel = styled.span`
  writing-mode: vertical-rl;
  font: 400 15.5px/20px ${CJK};
  color: #55585a;
`;
const SideFoot = styled.div`
  margin-top: auto;
  height: 34px;
  display: flex;
  align-items: center;
  border-top: 1px solid #c6c9c9;
  background: #edf0f0;
`;

const sideTabs: Array<{ h: number; t: string; icon: React.ReactNode }> = [
  { h: 104, t: "我的导图", icon: <><path d="M1 6V1H9L11 4H21V8H1Z" stroke="#4a4f58" /><path d="M0 7H22V21H0Z" fill="#3d4f93" stroke="none" /><path d="M6 11H9V19H6ZM11 11H16V19H11Z" fill="#e8edff" stroke="none" /></> },
  { h: 71, t: "标记", icon: <><path d="M8 1H14V20H8Z" stroke="#3d7a5b" /><path d="M1 5H10V10H1Z" fill="#e4f0ff" stroke="#37598e" /><path d="M11 10H21V15H11Z" fill="#eef7e6" stroke="#507d42" /></> },
  { h: 102, t: "任务信息", icon: <><circle cx="11" cy="11" r="10" /><path d="M11 4V12L6 15" /><path d="M13 16L16 19L21 13" stroke="#9aa02f" strokeWidth="3" /></> },
  { h: 72, t: "资源", icon: <><path d="M8 13C3 8 6 1 11 1S19 8 14 13L20 16V20H2V16Z" /></> },
  { h: 102, t: "导图部件", icon: <><path d="M6 5H21V21H6Z" stroke="#3e5f86" /><path d="M1 1H17V17H1Z" fill="#eaf3fb" stroke="#3e5f86" /><path d="M5 13V7M9 14V4M13 13V7M5 10H13" stroke="#3e5f86" /></> },
  { h: 88, t: "资源库", icon: <><path d="M1 1H12V14H1Z" stroke="#a3522f" fill="#f7e3d6" /><path d="M5 4H16V18H5Z" stroke="#c2813a" fill="#faeed6" /><path d="M9 7H21V21H9Z" stroke="#6c7434" fill="#f4f5dc" /></> },
  { h: 71, t: "搜索", icon: <><path d="M3 1H8V6H3ZM14 1H19V6H14ZM1 9H9V20H1ZM13 9H21V20H13ZM9 11H13M5 6V20M16 6V20" /></> },
  { h: 88, t: "浏览器", icon: <><circle cx="11" cy="8" r="7" /><path d="M6 15H16V19H6Z" fill="#444" /></> },
  { h: 102, t: "头脑风暴", icon: <><path d="M8 15C7 12 4 11 4 7A7 6.5 0 0 1 18 7C18 11 15 12 14 15ZM8 15V21H14V15M8 18H14M9 8L11 11L13 8M11 11V15" /></> },
];

function SideBar() {
  return (
    <Side>
      {sideTabs.map((s) => (
        <SideTab key={s.t} $h={s.h}>
          <svg width="22" height="22" viewBox="0 0 22 22" fill="none" stroke="#56595b" strokeWidth="1.7">{s.icon}</svg>
          <SideLabel>{s.t}</SideLabel>
        </SideTab>
      ))}
      <SideFoot>
        <Cell $ml={-6} $w={20}>
          <svg width="20" height="18" viewBox="0 0 20 18">
            <path d="M0 0H20V18H0Z" fill="#6d706e" /><path d="M12 2H18V6H15V16H12Z" fill="#f3f5f4" />
          </svg>
        </Cell>
        <Cell $ml={5}><Down c="#4b4e4d" s={8} /></Cell>
      </SideFoot>
    </Side>
  );
}

const Ball = styled.div`
  position: absolute;
  left: 1895px;
  top: 631px;
  width: 64px;
  height: 64px;
  border-radius: 50%;
  border: 2px solid #a9b6aa;
  background: radial-gradient(circle at 50% 25%, #5cc065, #2c9c3a 65%, #238a31);
  color: #eefbea;
  font: 700 16px/60px "Liberation Sans", sans-serif;
  padding-left: 4px;
`;

/* ---------- notepad window ---------- */

const Notepad = styled.section`
  position: absolute;
  left: 158px;
  top: 745px;
  width: 1707px;
  height: 280px;
  padding: 0 11px;
  display: flex;
  flex-direction: column;
  background: #959bfd;
  border: 1px solid #5f66b4;
  border-bottom: none;
`;
const PadTitle = styled.div`
  flex: none;
  height: 43px;
  display: grid;
  grid-template-columns: 470px 1fr 470px;
  color: #2f3260;
  font: 400 19.5px/41px ${UI};
`;
const PadIcon = styled.div`
  padding: 8px 0 0 6px;
`;
const PadName = styled.div`
  text-align: center;
  padding-right: 1px;
`;
const PadButtons = styled.div`
  display: flex;
  justify-content: flex-end;
  align-items: flex-start;
  margin-right: -2px;
`;
const PadClose = styled.div`
  width: 63px;
  height: 28px;
  margin-left: 12px;
  display: grid;
  place-items: center;
  background: #d05850;
`;
const PadMenu = styled.nav`
  flex: none;
  height: 29px;
  display: flex;
  align-items: center;
  background: linear-gradient(#f6f6fb, #eff3f7 50%, #f3f0f7);
  border-bottom: 1px solid #8fa1ab;
  color: #161616;
  font: 400 16.5px/28px ${UI};
`;
const PadBody = styled.div`
  flex: 1;
  display: grid;
  grid-template-columns: 1fr 18px;
  padding-right: 4px;
  background: #fdfffe;
  border-right: 2px solid #5f8fdc;
`;
const PadText = styled.div`
  font: 300 32.5px/50px ${SONG};
  color: #1c1c1c;
`;
const PadLine = styled.div<{ $pl: number; $mt?: number }>`
  display: flex;
  padding-left: ${(p) => p.$pl}px;
  margin-top: ${(p) => p.$mt ?? 0}px;
`;
const Selected = styled.span`
  flex: none;
  height: 34px;
  line-height: 32px;
  margin: 9px 0 7px;
  background: #2a8ff0;
  color: #d9f0ff;
`;

const padMenus: Array<[string, number, number]> = [
  ["文件(F)", 9, 54], ["编辑(E)", 19, 55], ["格式(O)", 20, 59], ["查看(V)", 19, 56], ["帮助(H)", 20, 58],
];

function NotepadWindow() {
  return (
    <Notepad>
      <PadTitle>
        <PadIcon>
          <svg width="20" height="24" viewBox="0 0 20 24">
            <path d="M1 4H18V23H1Z" fill="#8fd0dd" stroke="#e6f6f6" strokeWidth="1.4" />
            <path d="M3 1V5M6 1V5M9 1V5M12 1V5M15 1V5" stroke="#3f6b8a" />
            <path d="M11 6H17V22H6Z" fill="#b9e6ea" />
          </svg>
        </PadIcon>
        <PadName><Fit w={148}>无标题 - 记事本</Fit></PadName>
        <PadButtons>
          <svg width="12" height="28" viewBox="0 0 12 28"><path d="M0 17H12V20H0Z" fill="#1c2380" /></svg>
          <Cell $ml={25}>
            <svg width="14" height="28" viewBox="0 0 14 28" fill="none" stroke="#1c2380" strokeWidth="1.5"><path d="M1 10H13V20H1Z" /><path d="M0 10H14" strokeWidth="3" /></svg>
          </Cell>
          <PadClose>
            <svg width="11" height="11" viewBox="0 0 11 11" stroke="#fff" strokeWidth="2.2"><path d="M1 1L10 10M10 1L1 10" /></svg>
          </PadClose>
        </PadButtons>
      </PadTitle>
      <PadMenu>
        {padMenus.map(([t, ml, w]) => (
          <Cell key={t} $ml={ml}><Fit w={w}>{t}</Fit></Cell>
        ))}
      </PadMenu>
      <PadBody>
        <PadText>
          <PadLine $pl={21} $mt={-3}>
            <Fit w={132}>当对象在</Fit><Fit w={18}> </Fit><Fit w={70}>Eden</Fit><Fit w={18}> </Fit><Fit w={98}>出生后</Fit>
          </PadLine>
          <PadLine $pl={8} $mt={50}>
            <Fit w={29}>( </Fit><Fit w={133}>包括一个</Fit><Fit w={19}> </Fit>
            <Selected><Fit w={137}>Survivor</Fit><Fit w={18}> </Fit><Fit w={65}>区域</Fit></Selected>
            <Fit w={33}>，</Fit><Fit w={168}>这里假设是</Fit><Fit w={19}> </Fit><Fit w={66}>from</Fit><Fit w={19}> </Fit><Fit w={66}>区域</Fit><Fit w={34}> )</Fit>
          </PadLine>
        </PadText>
        <Track>
          <Spacer $h={11} />
          <Cell $ml={4}><Chevron c="#c2c4c4" w={11} h={7} d="M1 6L5.5 2L10 6" /></Cell>
        </Track>
      </PadBody>
    </Notepad>
  );
}

/* ---------- taskbar ---------- */

const Taskbar = styled.footer`
  flex: none;
  height: 56px;
  display: flex;
  align-items: center;
  border-top: 1px solid #6d72a8;
  background: linear-gradient(90deg, #6c6db4, #8f8fc9 12%, #8489c6 45%, #8488c4 90%, #6a70b4 96%, #5a64b0);
`;
const Task = styled.div<{ $ml: number; $pad: number }>`
  flex: none;
  width: 222px;
  height: 55px;
  margin-left: ${(p) => p.$ml}px;
  padding-left: ${(p) => p.$pad}px;
  display: flex;
  align-items: center;
  gap: 8px;
  border: 1px solid #b6b5dd;
  border-top-color: #8585bb;
  background: linear-gradient(90deg, #8f8ec4, #a09fd0);
  color: #eef0ff;
  font-size: 17px;
`;
const Tray = styled.div`
  margin-left: auto;
  display: flex;
  align-items: center;
  color: #eceefb;
  font-size: 17px;
`;
const Clock = styled.div`
  width: 86px;
  margin: 0 31px 0 18px;
  text-align: center;
  line-height: 24px;
  color: #f1f2fc;
`;

function Tasks() {
  return (
    <Taskbar>
      <Task $ml={23} $pad={14}>
        <svg width="41" height="42" viewBox="0 0 41 42">
          <rect x="9" y="1" width="31" height="31" rx="6" fill="#1d9be0" />
          <rect x="17" y="6" width="23" height="32" rx="6" fill="#1583cd" />
          <rect x="3" y="10" width="29" height="29" rx="5" fill="#7c93c6" stroke="#f3ae2c" strokeWidth="6" />
          <rect x="12" y="17" width="12" height="14" rx="2" fill="#a9b7dc" stroke="#2a62a9" strokeWidth="3" />
        </svg>
        <Fit w={135}>CentOS-RD - V...</Fit>
      </Task>
      <Task $ml={6} $pad={11}>
        <svg width="44" height="42" viewBox="0 0 44 42">
          <path d="M28 5H43V38H28Z" fill="#fff" stroke="#333" />
          <path d="M0 0H28V42H0Z" fill="#2b4da8" />
          <path d="M4 12L14 18L24 12V31L14 25L4 31Z" fill="#fff" />
          <path d="M35 15H40V20H35ZM35 24H40V29H35ZM35 17H31V26H35" fill="none" stroke="#333" strokeWidth="1.6" />
        </svg>
        <Fit w={140}>Mindjet MindM...</Fit>
      </Task>
      <Task $ml={5} $pad={16}>
        <svg width="39" height="44" viewBox="0 0 40 44">
          <path d="M4 2L20 1L24 18L20 42L8 43L10 18L2 12Z" fill="#22242a" />
          <circle cx="8" cy="9" r="6" fill="#b9bcc4" /><circle cx="8" cy="9" r="3" fill="#555" />
          <path d="M18 13L37 11V31L18 29Z" fill="#d9302a" stroke="#581a1a" strokeWidth="1.6" />
        </svg>
        <Fit w={98}>Recording...</Fit>
      </Task>
      <Tray>
        <svg width="10" height="7" viewBox="0 0 10 7"><path d="M0 7H10L5 0Z" fill="#f4f5ff" /></svg>
        <Cell $ml={18} $w={24}>
          <svg width="24" height="21" viewBox="0 0 24 21" fill="none" stroke="#f7f8ff" strokeWidth="1.8">
            <path d="M8 3H22V14H9M14 14V19M9 19H19M4 8V19" /><path d="M1 1H7V7H1Z" />
          </svg>
        </Cell>
        <Cell $ml={9} $w={24}>
          <svg width="24" height="24" viewBox="0 0 24 24">
            <circle cx="12" cy="12" r="11.5" fill="#efd730" /><path d="M3 18A11 11 0 0 0 22 16L12 14Z" fill="#4d9a36" />
            <circle cx="12" cy="11" r="8" fill="#f5e545" /><path d="M12 6V17M6.5 11.5H17.5" stroke="#2b5e22" strokeWidth="3" />
          </svg>
        </Cell>
        <Cell $ml={12} $w={20}>
          <svg width="20" height="21" viewBox="0 0 20 21" fill="none" stroke="#fff" strokeWidth="2">
            <path d="M5 7V1H14V7" stroke="#222" /><path d="M1 7H10V18H1Z" fill="#3a4048" /><path d="M6 4H15V12H6Z" /><circle cx="14" cy="15" r="5.5" fill="#1f8b3a" stroke="none" />
          </svg>
        </Cell>
        <Cell $ml={14} $w={23}>
          <svg width="23" height="22" viewBox="0 0 23 22">
            <path d="M1 0H3V21H1Z" fill="#fff" /><path d="M4 2C9 0 12 6 20 4V13C12 15 9 10 4 12Z" fill="#f6f6fb" />
            <circle cx="16" cy="15" r="6.5" fill="#d6483e" /><path d="M13 12L19 18M19 12L13 18" stroke="#fff" strokeWidth="2" />
          </svg>
        </Cell>
        <Cell $ml={10} $w={23}>
          <svg width="23" height="21" viewBox="0 0 23 21">
            <path d="M1 7H4V14H1ZM5 6L11 1V20L5 15Z" fill="#fff" /><circle cx="16" cy="14" r="6" fill="#e5d5dc" stroke="#d6483e" strokeWidth="2.4" /><path d="M12 10L20 18" stroke="#d6483e" strokeWidth="2.4" />
          </svg>
        </Cell>
        <Cell $ml={12} $w={22}>
          <svg width="22" height="21" viewBox="0 0 22 21" fill="none" stroke="#fff" strokeWidth="2">
            <path d="M12 3H20V20H12ZM14 1H18" /><path d="M2 1V5M7 1V5M1 6H8V11H1ZM4.5 11V20" fill="#fff" />
          </svg>
        </Cell>
        <Cell $ml={16}><Fit w={36}>ENG</Fit></Cell>
        <Clock><Fit w={43}>16:00</Fit><Fit w={83}>2017/8/13</Fit></Clock>
      </Tray>
    </Taskbar>
  );
}

/* ---------- bottom sheet ---------- */

const Sheet = styled.section`
  position: absolute;
  left: 642px;
  top: 947px;
  width: 676px;
  height: 140px;
  border-radius: 22px 22px 0 0;
  background: #fdfefe;
  box-shadow: 0 2px 4px rgba(60, 60, 80, 0.18);
  overflow: hidden;
`;
const SheetTop = styled.div`
  height: 68px;
  display: flex;
  align-items: center;
  padding-left: 26px;
`;
const RoundButton = styled.div<{ $ml?: number }>`
  flex: none;
  width: 38px;
  height: 38px;
  margin-left: ${(p) => p.$ml ?? 0}px;
  border-radius: 50%;
  display: grid;
  place-items: center;
  background: #e8e7e9;
`;
const Handle = styled.i`
  width: 77px;
  height: 6px;
  margin-left: 168px;
  border-radius: 3px;
  background: #cfceca;
`;
const SheetActions = styled.div`
  display: flex;
  align-items: flex-start;
  height: 72px;
  margin-top: 16px;
`;

function ToolSheet() {
  return (
    <Sheet>
      <SheetTop>
        <RoundButton>
          <svg width="17" height="17" viewBox="0 0 17 17" fill="#111"><path d="M0 0H12L0 12ZM17 5V17H5Z" /></svg>
        </RoundButton>
        <RoundButton $ml={30}>
          <svg width="22" height="4" viewBox="0 0 22 4"><rect width="22" height="3.6" rx="1" fill="#111" /></svg>
        </RoundButton>
        <Handle />
        <RoundButton $ml={235}>
          <svg width="18" height="18" viewBox="0 0 18 18" stroke="#111" strokeWidth="2.6" strokeLinecap="round"><path d="M1.5 1.5L16.5 16.5M16.5 1.5L1.5 16.5" /></svg>
        </RoundButton>
      </SheetTop>
      <SheetActions>
        <Cell $ml={49} $w={38}>
          <svg width="38" height="38" viewBox="0 0 38 38" fill="none" stroke="#1b1b1b" strokeWidth="2.6"><path d="M37 36.5H2M20 18.5L2 36.5L20 54" /></svg>
        </Cell>
        <Cell $ml={322} $w={38}>
          <svg width="38" height="48" viewBox="0 0 38 48" fill="none" stroke="#1b1b1b" strokeWidth="2.8"><path d="M1 29H26A10 8.5 0 0 1 26 46H4" /><path d="M0 30L7 23V30Z" fill="#1b1b1b" stroke="none" /></svg>
        </Cell>
        <Cell $ml={53} $w={38}>
          <svg width="38" height="48" viewBox="0 0 38 48" fill="none" stroke="#a9a9a9" strokeWidth="2.4"><path d="M37 29H12A10 8.5 0 0 0 12 46H34" /><path d="M38 30L31 23V30Z" fill="#a9a9a9" stroke="none" /></svg>
        </Cell>
        <Cell $ml={50} $w={42}>
          <svg width="42" height="52" viewBox="0 0 42 52" fill="none" stroke="#1b1b1b" strokeWidth="3"><path d="M1 35L15 50L41 24" /></svg>
        </Cell>
      </SheetActions>
    </Sheet>
  );
}

const Caret = styled.div`
  position: absolute;
  left: 614px;
  top: 704px;
`;

export default function App() {
  return (
    <Page lang="zh-CN">
      <Global />
      <Screen>
        <TitleArea />
        <Work>
          <MindMap />
          <Notes />
          <SideBar />
        </Work>
        <Tasks />
        <Capture />
        <Caret>
          <svg width="10" height="24" viewBox="0 0 10 24" fill="none" stroke="#333" strokeWidth="1.4"><path d="M0 1H4L5 2L6 1H10M5 2V22M0 23H4L5 22L6 23H10" /></svg>
        </Caret>
        <NotepadWindow />
        <Ball>50</Ball>
        <ToolSheet />
      </Screen>
    </Page>
  );
}
